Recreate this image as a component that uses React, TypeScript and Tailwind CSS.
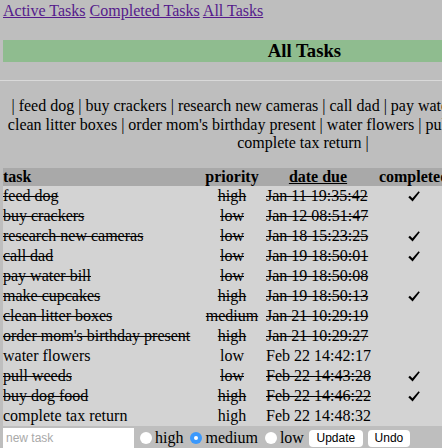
import React from "react";

type Task = {
    name: string;
    priority: "high" | "medium" | "low";
    due: string;
    struck: boolean;
    done: boolean;
};

const tasks: Task[] = [
    { name: "feed dog", priority: "high", due: "Jan 11 19:35:42", struck: true, done: true },
    { name: "buy crackers", priority: "low", due: "Jan 12 08:51:47", struck: true, done: false },
    { name: "research new cameras", priority: "low", due: "Jan 18 15:23:25", struck: true, done: true },
    { name: "call dad", priority: "low", due: "Jan 19 18:50:01", struck: true, done: true },
    { name: "pay water bill", priority: "low", due: "Jan 19 18:50:08", struck: true, done: false },
    { name: "make cupcakes", priority: "high", due: "Jan 19 18:50:13", struck: true, done: true },
    { name: "clean litter boxes", priority: "medium", due: "Jan 21 10:29:19", struck: true, done: false },
    { name: "order mom's birthday present", priority: "high", due: "Jan 21 10:29:27", struck: true, done: false },
    { name: "water flowers", priority: "low", due: "Feb 22 14:42:17", struck: false, done: false },
    { name: "pull weeds", priority: "low", due: "Feb 22 14:43:28", struck: true, done: true },
    { name: "buy dog food", priority: "high", due: "Feb 22 14:46:22", struck: true, done: true },
    { name: "complete tax return", priority: "high", due: "Feb 22 14:48:32", struck: false, done: false },
];

function Radio({ checked }: { checked?: boolean }) {
    return checked ? (
        <span className="flex w-[12px] h-[12px] rounded-full bg-[#3b99fc] items-center justify-center">
            <span className="block w-[4px] h-[4px] rounded-full bg-white" />
        </span>
    ) : (
        <span className="block w-[12px] h-[12px] rounded-full bg-white" />
    );
}

function Check() {
    return (
        <svg width="12" height="11" viewBox="0 0 12 11" className="inline-block align-[-1px]">
            <path d="M0.3 6.2 L1.9 4.8 L4.4 7.2 L10.6 0.3 L11.8 1.3 L4.6 10.6 Z" fill="black" />
        </svg>
    );
}

export default function App() {
    return (
        <div className="min-h-[448px] bg-[#bebebe] overflow-hidden font-['Liberation_Serif',serif] text-[16px] text-black">
            <div className="ml-[3px] w-[603px] pt-[2px]">
                {/* nav links */}
                <div className="leading-[18px] text-[#551a8b] whitespace-nowrap">
                    <a className="underline">Active Tasks</a> <a className="underline">Completed Tasks</a>{" "}
                    <a className="underline">All Tasks</a>
                </div>

                <h3 className="mt-[20px] h-[22px] leading-[22px] bg-[#8fbc8f] text-center font-bold text-[18.72px]">
                    All Tasks
                </h3>

                <div className="mt-[18px] -ml-[3px] w-[442px] h-[1px] bg-[#d9d9d9]" />

                {/* task names strip */}
                <div className="mt-[16px] -ml-[3px] text-center leading-[18.5px] whitespace-nowrap">
                    <div>| feed dog | buy crackers | research new cameras | call dad | pay water bill | make cupcakes |</div>
                    <div>clean litter boxes | order mom's birthday present | water flowers | pull weeds | buy dog food |</div>
                    <div>complete tax return |</div>
                </div>

                <table className="mt-[15px] table-fixed border-collapse w-[453px]">
                    <thead>
                        <tr className="bg-[#a9a9a9] leading-[18px]">
                            <th className="w-[197px] p-0 text-left font-bold">task</th>
                            <th className="w-[64px] p-0 text-center font-bold">priority</th>
                            <th className="w-[108px] p-0 text-center font-bold underline">date due</th>
                            <th className="w-[84px] p-0 text-center font-bold">completed</th>
                        </tr>
                    </thead>
                    <tbody>
                        {tasks.map((t) => (
                            <tr key={t.name} className={`bg-[#d3d3d3] leading-[18px] ${t.struck ? "line-through" : ""}`}>
                                <td className="p-0 py-[1px] whitespace-nowrap">{t.name}</td>
                                <td className="p-0 py-[1px] text-center">{t.priority}</td>
                                <td className="p-0 py-[1px] pl-[2px] whitespace-nowrap">{t.due}</td>
                                <td className="p-0 py-[1px] text-center">{t.done && <Check />}</td>
                            </tr>
                        ))}
                    </tbody>
                </table>

                {/* add / update form */}
                <div className="mt-[2px] flex items-center h-[21px] whitespace-nowrap">
                    <input
                        placeholder="new task"
                        className="w-[131px] h-[21px] bg-white pl-[3px] text-[12px] font-['Liberation_Sans',sans-serif] placeholder:text-[#a9a9a9] outline-none"
                    />
                    <span className="ml-[6px]"><Radio /></span>
                    <span className="ml-[3px]">high</span>
                    <span className="ml-[7px]"><Radio checked /></span>
                    <span className="ml-[3px]">medium</span>
                    <span className="ml-[7px]"><Radio /></span>
                    <span className="ml-[3px]">low</span>
                    <button className="ml-[5px] h-[17px] w-[54px] rounded-[4px] bg-white text-[12px] leading-[17px] font-['Liberation_Sans',sans-serif]">
                        Update
                    </button>
                    <button className="ml-[5px] h-[17px] w-[42px] rounded-[4px] bg-white text-[12px] leading-[17px] font-['Liberation_Sans',sans-serif]">
                        Undo
                    </button>
                </div>
            </div>
        </div>
    );
}
